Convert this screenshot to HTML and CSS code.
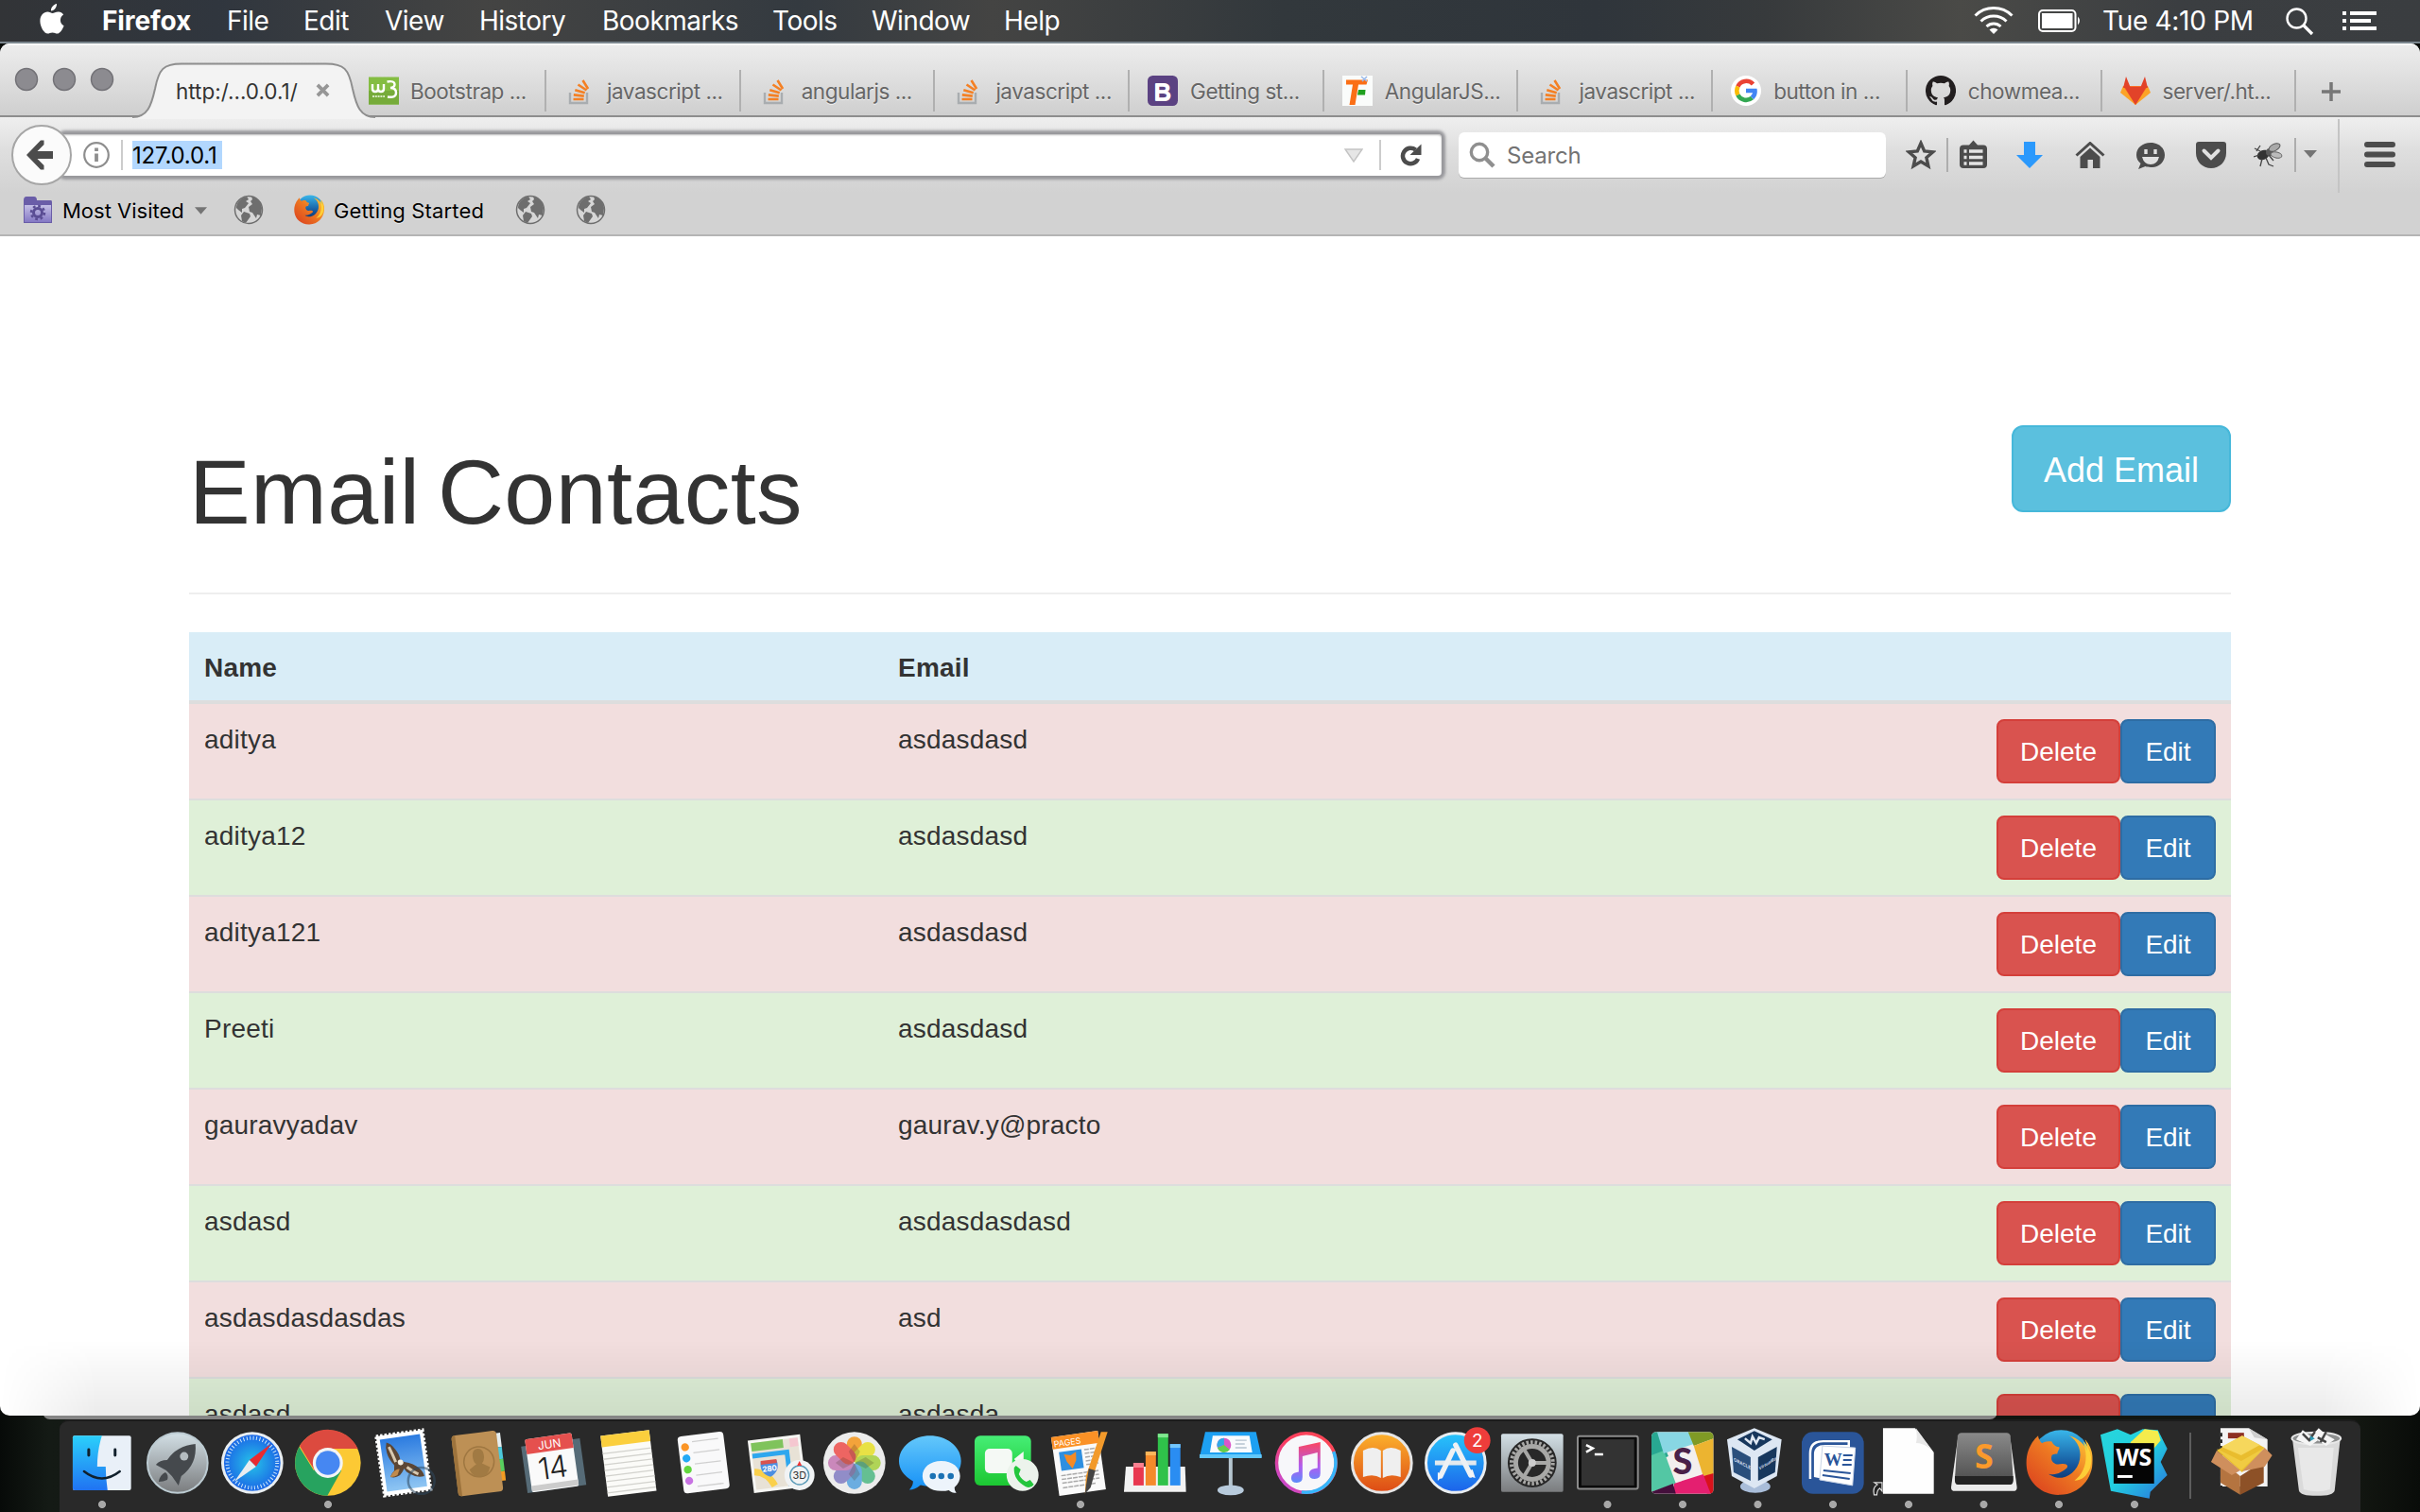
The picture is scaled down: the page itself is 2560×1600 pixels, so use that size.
FILE: index.html
```html
<!DOCTYPE html>
<html lang="en">
<head>
<meta charset="utf-8">
<title>Email Contacts</title>
<link rel="stylesheet" href="styles.css">
</head>
<body>
<svg class="defs" width="0" height="0" aria-hidden="true">
  <defs>
    <symbol id="so" viewBox="0 0 32 32">
      <path d="M6 18v11h18V18" fill="none" stroke="#a9adb0" stroke-width="2.4"/>
      <path d="M9.5 25h11M9.8 20.4l11 1.2M11.3 15.2l10.4 3M14.5 9.5l9 6M19.500 5l5.600 9" stroke="#f48024" stroke-width="2.600" fill="none"/>
    </symbol>
    <symbol id="globe" viewBox="0 0 32 32">
      <circle cx="16" cy="16" r="14.500" fill="#d6d6d6" stroke="#6e6e6e" stroke-width="1.500"/>
      <path d="M3 14C3 8 8 3 14 2l2 3-3 2 3 2-4 5-3 1 0 4-4-3zM19 2c6 1 10 6 11 12l-1 8-4-1-1 4-4-6-3-1-1-5 4-3-2-3 2-2zM11 18l6 2 1 3-5 7-4-2-1-6z" fill="#6e6e6e"/>
    </symbol>
    <symbol id="ff" viewBox="0 0 70 70">
      <circle cx="37" cy="32" r="31" fill="url(#gBlue)"/>
      <path d="M45 7c8 4 12 12 12 20 0 13-9 22-19 24-8 1-14-4-14-4 8 2 14-2 19-6 3-5-5-5-9-4-5 0-8-4-7-8 0-3 4-3 6-3 0-3 3-5 2-7-3 0-6-2-8-6-4 0-7 0-10 2-3-3-4-6-4-8C5 14-1 26 1 41c2 16 17 29 35 28 22-1 36-19 34-41-1-7-4-13-8-17 2 5 3 9 2 12C62 16 54 9 45 7z" fill="url(#gFox)"/>
      <path d="M60 13c6 16 3 32-9 41 8 0 13-5 16-12 4-11 0-23-7-29z" fill="#ffd93b" opacity=".85"/>
    </symbol>
    <linearGradient id="gBlue" x1="0" y1="0" x2="0" y2="1"><stop offset="0" stop-color="#39b6ea"/><stop offset=".6" stop-color="#14559c"/><stop offset="1" stop-color="#0b2a5c"/></linearGradient>
    <linearGradient id="gFox" x1="0" y1="1" x2="1" y2="0"><stop offset="0" stop-color="#d83a1e"/><stop offset=".55" stop-color="#ee7a22"/><stop offset="1" stop-color="#ffd23a"/></linearGradient>
    <linearGradient id="gFinder" x1="0" y1="0" x2="0" y2="1"><stop offset="0" stop-color="#2bd0fb"/><stop offset="1" stop-color="#2073f2"/></linearGradient>
    <linearGradient id="gSilver" x1="0" y1="0" x2="0" y2="1"><stop offset="0" stop-color="#d3e0e6"/><stop offset="1" stop-color="#7a7c7e"/></linearGradient>
    <radialGradient id="gSafari"><stop offset="0" stop-color="#26c3e8"/><stop offset="1" stop-color="#1b67e6"/></radialGradient>
    <linearGradient id="gSky" x1="0" y1="0" x2="0" y2="1"><stop offset="0" stop-color="#2b7be0"/><stop offset="1" stop-color="#8fc6f3"/></linearGradient>
    <linearGradient id="gGreen" x1="0" y1="0" x2="0" y2="1"><stop offset="0" stop-color="#46ee76"/><stop offset="1" stop-color="#1cc732"/></linearGradient>
    <linearGradient id="gMsg" x1="0" y1="0" x2="0" y2="1"><stop offset="0" stop-color="#64c8fb"/><stop offset="1" stop-color="#1590f6"/></linearGradient>
    <linearGradient id="gBooks" x1="0" y1="0" x2="0" y2="1"><stop offset="0" stop-color="#fcb22c"/><stop offset="1" stop-color="#dd4a15"/></linearGradient>
    <linearGradient id="gStore" x1="0" y1="0" x2="0" y2="1"><stop offset="0" stop-color="#27c5fb"/><stop offset="1" stop-color="#1c62ea"/></linearGradient>
    <linearGradient id="gRing" x1="0" y1="1" x2="1" y2="0"><stop offset="0" stop-color="#b84df0"/><stop offset=".5" stop-color="#fb3c5f"/><stop offset="1" stop-color="#fb4a55"/></linearGradient>
    <linearGradient id="gNote" x1="0" y1="0" x2="0" y2="1"><stop offset="0" stop-color="#fb4660"/><stop offset=".6" stop-color="#b05cf0"/><stop offset="1" stop-color="#5c8cfb"/></linearGradient>
    <linearGradient id="gSub" x1="0" y1="0" x2="0" y2="1"><stop offset="0" stop-color="#8a8a8a"/><stop offset="1" stop-color="#4c4c4c"/></linearGradient>
    <linearGradient id="gWs" x1="0" y1="0" x2="1" y2="1"><stop offset="0" stop-color="#27d6dc"/><stop offset=".5" stop-color="#22cfe0"/><stop offset="1" stop-color="#2a72dd"/></linearGradient>
    <linearGradient id="gPurple" x1="0" y1="0" x2="0" y2="1"><stop offset="0" stop-color="#c4bfe6"/><stop offset="1" stop-color="#8478c4"/></linearGradient>
  </defs>
</svg>

<header class="menubar">
  <svg class="apple" viewBox="0 0 26 32"><path d="M18 0c.3 3.500-2.500 7.300-6 7.400C11.600 4 14.800.6 18 0zM25.600 23.200c-1.500 4-4.300 8.300-7 8.400-2 0-2.700-1.200-5.100-1.200s-3.300 1.200-5.200 1.200C5 31.600.4 24.700.4 18.200c0-6.300 4-9.600 7.900-9.700 2.200 0 4 1.400 5.300 1.400 1.300 0 3.700-1.700 6.500-1.500 1.700.1 3.900 1 5 3-4.700 3-3.900 9.800.5 11.800z" fill="#fff"/></svg>
  <nav class="menus"><b>Firefox</b><span>File</span><span>Edit</span><span>View</span><span>History</span><span>Bookmarks</span><span>Tools</span><span>Window</span><span>Help</span></nav>
  <svg class="wifi" viewBox="0 0 42 30"><g fill="none" stroke="#fff" stroke-width="3"><path d="M1.500 10.500a28 28 0 0 1 39 0"/><path d="M7.500 16.500a19.500 19.500 0 0 1 27 0"/><path d="M13.500 22a11 11 0 0 1 15 0"/></g><path d="M21 30l-4.500-4.500a6.500 6.500 0 0 1 9 0z" fill="#fff"/></svg>
  <svg class="battery" viewBox="0 0 46 24"><rect x="1" y="1" width="38.500" height="22" rx="4" fill="none" stroke="#fff" stroke-width="2"/><rect x="4" y="4" width="32.500" height="16" fill="#fff"/><path d="M42 7.500q4 4.500 0 9z" fill="#fff"/></svg>
  <span class="clock">Tue 4:10 PM</span>
  <svg class="spot" viewBox="0 0 30 30"><circle cx="11.500" cy="11.500" r="10" fill="none" stroke="#fff" stroke-width="2.400"/><path d="M18.500 18.500l9.500 9.500" stroke="#fff" stroke-width="3.200"/></svg>
  <svg class="list" viewBox="0 0 36 20"><path d="M0 2h4M8 2h28M0 10h4M8 10h22M0 18h4M8 18h28" stroke="#fff" stroke-width="4"/></svg>
</header>

<main class="window">
  <div class="tabs">
    <svg class="lights" viewBox="0 0 140 76"><g fill="#8c8b90" stroke="#737277" stroke-width="1.500"><circle cx="28" cy="38" r="11.500"/><circle cx="68" cy="38" r="11.500"/><circle cx="108" cy="38" r="11.500"/></g></svg>
    <div class="tab-active">
      <svg class="tab-shape" viewBox="0 0 260 60"><path d="M0 58.500C16 58.500 20 46 24 28 28 8 33 2.500 52 2.500H205c19 0 24 5.500 28 25.500 4 18 8 30.500 24 30.500V60H0z" fill="#f3f3f3"/><path d="M0 58C16 58 20 46 24 28 28 7 33 1.500 52 1.500H205c19 0 24 5.500 28 26.500 4 18 8 30 24 30" fill="none" stroke="#8e8e8e" stroke-width="2"/></svg>
      <span>http:/...0.0.1/</span>
      <svg class="close" viewBox="0 0 16 16"><path d="M2 2l12 12M14 2L2 14" stroke="#969696" stroke-width="4"/></svg>
    </div>
    <div class="tab first"><svg viewBox="0 0 32 32"><rect y="1.500" width="32" height="29" fill="#84bd42"/><rect y="16" width="32" height="14.500" fill="#76ab3a"/><path d="M4 9v5q0 3 3 3t3-3V9M10 12v2q0 3 3 3t3-3V9M19.500 6.500q8-1.500 8 3 0 3-4.500 3.500 6 0 6 5 0 6-9 4.500" fill="none" stroke="#fff" stroke-width="2.400"/><path d="M4 22h13" stroke="#d6eac0" stroke-width="2.200" stroke-dasharray="2 .8"/></svg><span>Bootstrap ...</span></div>
    <div class="tab"><svg><use href="#so"/></svg><span>javascript ...</span></div>
    <div class="tab"><svg><use href="#so"/></svg><span>angularjs ...</span></div>
    <div class="tab"><svg><use href="#so"/></svg><span>javascript ...</span></div>
    <div class="tab"><svg viewBox="0 0 32 32"><rect width="32" height="32" rx="5.500" fill="#5b4282"/><text x="16" y="25.500" text-anchor="middle" class="t-b">B</text></svg><span>Getting st...</span></div>
    <div class="tab"><svg viewBox="0 0 32 32"><rect width="32" height="32" fill="#fafcfb"/><path d="M4 4.500h23l-1.500 5H17L13.500 31H7.500L11 9.500H4z" fill="#fb6f16"/><path d="M17 15h7.500l-.5 5.500h-8z" fill="#1fa01f"/><path d="M20 1l6 5M26 1l-5 5" stroke="#9bb8e8" stroke-width="1.500"/></svg><span>AngularJS...</span></div>
    <div class="tab"><svg><use href="#so"/></svg><span>javascript ...</span></div>
    <div class="tab"><svg viewBox="0 0 32 32"><circle cx="16" cy="16" r="16" fill="#fff"/><g fill="none" stroke-width="4.600"><path d="M23.500 9A9.800 9.800 0 0 0 7.400 11.500" stroke="#ea4335"/><path d="M7.400 11.500a10 10 0 0 0 0 9" stroke="#fbbc05"/><path d="M7.400 20.500A9.800 9.800 0 0 0 22.500 23.500" stroke="#34a853"/><path d="M22.500 23.500Q26 20 25.500 16H16" stroke="#4285f4"/></g></svg><span>button in ...</span></div>
    <div class="tab"><svg viewBox="0 0 16 16"><path fill="#221e1f" d="M8 0a8 8 0 0 0-2.530 15.590c.4.070.55-.17.55-.38v-1.490c-2.230.48-2.700-.94-2.700-.94-.36-.93-.89-1.170-.89-1.170-.73-.5.060-.49.060-.49.8.06 1.230.83 1.230.83.71 1.220 1.870.87 2.330.66.070-.52.28-.87.5-1.070-1.770-.2-3.640-.89-3.640-3.950 0-.87.310-1.590.82-2.150-.08-.2-.36-1.020.08-2.120 0 0 .67-.21 2.200.82a7.600 7.600 0 0 1 4 0c1.530-1.040 2.200-.82 2.200-.82.44 1.100.16 1.920.08 2.120.51.560.82 1.270.82 2.150 0 3.070-1.870 3.750-3.650 3.950.29.25.54.73.54 1.480v2.190c0 .21.150.46.550.38A8 8 0 0 0 8 0z"/></svg><span>chowmea...</span></div>
    <div class="tab"><svg viewBox="0 0 32 32"><path d="M16 31L0 18l3-7h26l3 7z" fill="#fca326"/><path d="M16 31L3 11h26z" fill="#fc6d26"/><path d="M6 1l4.500 11h11L26 1l3 12-2 0-11 18L5 13H3z" fill="#e24329"/></svg><span>server/.ht...</span></div>
    <svg class="plus" viewBox="0 0 20 20"><path d="M10 0v20M0 10h20" stroke="#777" stroke-width="3.500"/></svg>
  </div>

  <div class="toolbar">
    <div class="url">
      <svg class="info" viewBox="0 0 28 28"><circle cx="14" cy="14" r="12.800" fill="none" stroke="#8e8e8e" stroke-width="2.200"/><path d="M14 12.500v8.500M14 6.500v3.500" stroke="#8e8e8e" stroke-width="3.800"/></svg>
      <i class="vsep"></i><span class="address">127.0.0.1</span>
      <svg class="drop" viewBox="0 0 20 15"><path d="M1 1h18L10 14z" fill="#e6e6e6" stroke="#c4c4c4" stroke-width="1.500"/></svg>
      <i class="vsep"></i>
      <svg class="reload" viewBox="0 0 24 24"><path d="M17.500 6.500A8.300 8.300 0 1 0 20 16" fill="none" stroke="#4c4c4c" stroke-width="4.500"/><path d="M23.500.5v11.500H11.500z" fill="#4c4c4c"/></svg>
    </div>
    <svg class="back" viewBox="0 0 64 64"><circle cx="32" cy="32" r="31" fill="#fbfbfb" stroke="#a6a6a6" stroke-width="2"/><path d="M16 32L31 16.500h3.500v4.500L27.500 28H44v8H27.500l7 7v4.500H31z" fill="#4c4c4c"/></svg>
    <div class="search"><svg viewBox="0 0 28 28"><circle cx="11" cy="11" r="8.700" fill="none" stroke="#8f8f8f" stroke-width="3.400"/><path d="M17 17l9 9" stroke="#8f8f8f" stroke-width="4.500"/></svg><span>Search</span></div>
    <svg class="i-star" viewBox="0 0 32 32"><path d="M16 3.500l3.700 8.400 9.100.9-6.900 6 2 9-7.900-4.700L8.100 27.800l2-9-6.900-6 9.100-.9z" fill="none" stroke="#4c4c4c" stroke-width="3.400"/></svg>
    <i class="tsep a"></i>
    <svg class="i-clip" viewBox="0 0 29 32"><path d="M4 5.500h6l4.500-5 4.500 5h6q4 0 4 4V26q0 4-4 4H4q-4 0-4-4V9.500q0-4 4-4z" fill="#4c4c4c"/><path d="M4.500 12h3M10 12h14.500M4.500 18.500h3M10 18.500h14.500M4.500 25h3M10 25h14.500" stroke="#e4e4e4" stroke-width="3.400"/></svg>
    <svg class="i-down" viewBox="0 0 28 28"><path d="M8 0h12v14h8L14 28 0 14h8z" fill="#2b99fc"/></svg>
    <svg class="i-home" viewBox="0 0 32 28"><path d="M1.500 14.500L16 1.500l14.500 13" fill="none" stroke="#4c4c4c" stroke-width="3"/><path d="M5.500 16L16 6.500 26.500 16v12h-7.500v-9h-5.500v9h-8z" fill="#4c4c4c"/></svg>
    <svg class="i-smile" viewBox="0 0 30 28"><path d="M15 0c8.500 0 15 5.500 15 13s-6 13-15 13c-2 0-4-.3-5.500-.9L2 28l2.500-6C1.500 19.500 0 16.500 0 13 0 5.500 6.500 0 15 0z" fill="#4c4c4c"/><path d="M10 7v5M20 7v5" stroke="#e0e0e0" stroke-width="3.400"/><path d="M6 15h18q-2 8-9 8t-9-8z" fill="#e0e0e0"/></svg>
    <svg class="i-pocket" viewBox="0 0 32 28"><path d="M3 0h26q3 0 3 3v9c0 9-7 16-16 16S0 21 0 12V3q0-3 3-3z" fill="#4c4c4c"/><path d="M8.500 9.500l7.500 7.500 7.500-7.500" fill="none" stroke="#e0e0e0" stroke-width="4" stroke-linecap="round"/></svg>
    <svg class="i-bug" viewBox="0 0 32 26"><ellipse cx="10" cy="13" rx="6.500" ry="5" fill="#333" transform="rotate(-25 10 13)"/><circle cx="17" cy="10" r="4" fill="#5a5a5a"/><ellipse cx="22" cy="5" rx="6.500" ry="3.500" fill="#a9a9a9" stroke="#555" transform="rotate(-28 22 5)"/><ellipse cx="24" cy="13" rx="6" ry="3" fill="#bbb" stroke="#666" transform="rotate(12 24 13)"/><path d="M7 9L1 6M6 13l-6 2M9 17L7 25M13 16l3 7 5 2M16 13l5 6M3 9l4-6" stroke="#444" stroke-width="1.300" fill="none"/></svg>
    <i class="tsep b"></i>
    <svg class="i-tri" viewBox="0 0 14 8"><path d="M0 0h14L7 8z" fill="#747474"/></svg>
    <i class="tsep c"></i>
    <svg class="i-menu" viewBox="0 0 33 27"><path d="M3 3h27M3 13.500h27M3 24h27" stroke="#4c4c4c" stroke-width="6" stroke-linecap="round"/></svg>
  </div>

  <div class="bookmarks">
    <svg class="folder" viewBox="0 0 32 32"><path d="M1 5q0-4 3-4h8q3 0 3 4h15q1 0 1 2v22H1z" fill="#6a5da8"/><path d="M2 10h28v18H2z" fill="url(#gPurple)"/><circle cx="16" cy="18" r="4.500" fill="none" stroke="#5a4d94" stroke-width="3"/><circle cx="16" cy="18" r="7" fill="none" stroke="#5a4d94" stroke-width="2.500" stroke-dasharray="2.750"/></svg>
    <span class="bm mv">Most Visited</span>
    <svg class="bm-tri" viewBox="0 0 14 8"><path d="M0 0h14L7 8z" fill="#747474"/></svg>
    <svg class="g1"><use href="#globe"/></svg>
    <svg class="ffico"><use href="#ff"/></svg>
    <span class="bm gs">Getting Started</span>
    <svg class="g2"><use href="#globe"/></svg>
    <svg class="g3"><use href="#globe"/></svg>
  </div>

  <section class="page">
    <div class="heading"><h1>Email Contacts</h1><button class="btn info-btn">Add Email</button></div>
    <table>
      <thead><tr><th>Name</th><th>Email</th><th></th></tr></thead>
      <tbody>
        <tr><td>aditya</td><td>asdasdasd</td><td><div class="acts"><button class="btn del">Delete</button><button class="btn edit">Edit</button></div></td></tr>
        <tr><td>aditya12</td><td>asdasdasd</td><td><div class="acts"><button class="btn del">Delete</button><button class="btn edit">Edit</button></div></td></tr>
        <tr><td>aditya121</td><td>asdasdasd</td><td><div class="acts"><button class="btn del">Delete</button><button class="btn edit">Edit</button></div></td></tr>
        <tr><td>Preeti</td><td>asdasdasd</td><td><div class="acts"><button class="btn del">Delete</button><button class="btn edit">Edit</button></div></td></tr>
        <tr><td>gauravyadav</td><td>gaurav.y@practo</td><td><div class="acts"><button class="btn del">Delete</button><button class="btn edit">Edit</button></div></td></tr>
        <tr><td>asdasd</td><td>asdasdasdasd</td><td><div class="acts"><button class="btn del">Delete</button><button class="btn edit">Edit</button></div></td></tr>
        <tr><td>asdasdasdasdas</td><td>asd</td><td><div class="acts"><button class="btn del">Delete</button><button class="btn edit">Edit</button></div></td></tr>
        <tr><td>asdasd</td><td>asdasda</td><td><div class="acts"><button class="btn del">Delete</button><button class="btn edit">Edit</button></div></td></tr>
      </tbody>
    </table>
    <div class="shade"></div>
  </section>
</main>

<div class="behind"></div>
<footer class="dock">
  <svg class="on" viewBox="0 0 80 98"><rect x="9" y="17" width="62" height="58" rx="2" fill="#e9f0f8"/><path d="M11 17h29q-5 16-5 33h9q0 12 2 25H11q-2 0-2-2V19q0-2 2-2z" fill="url(#gFinder)"/><path d="M26 32v6M54 32v6" stroke="#10202c" stroke-width="3" stroke-linecap="round"/><path d="M21 55q19 15 38 0" fill="none" stroke="#10202c" stroke-width="2.500" stroke-linecap="round"/></svg>
  <svg viewBox="0 0 80 98"><circle cx="40" cy="46" r="32" fill="url(#gSilver)" stroke="#bccbd2" stroke-width="2"/><path d="M59 26q2 22-15 34l-3 10-7-10-6-6-11-6q4-5 12-5 10-15 30-17z" fill="#45494d"/><circle cx="47" cy="39" r="4.500" fill="#b4bcc0"/><path d="M27 56q4 3 2 8-4 2-9 2 1-7 7-10z" fill="#45494d"/></svg>
  <svg viewBox="0 0 80 98"><circle cx="40" cy="46" r="33" fill="#e9eef1"/><circle cx="40" cy="46" r="30" fill="url(#gSafari)"/><circle cx="40" cy="46" r="26.500" fill="none" stroke="#d0e8fa" stroke-width="4" stroke-dasharray="1 2.470"/><path d="M60 26L44 50l-7-7z" fill="#ea2a30"/><path d="M21 66l16-23 7 7z" fill="#e9edf0"/></svg>
  <svg class="on" viewBox="0 0 80 98"><circle cx="40" cy="46" r="35" fill="#fcc934"/><path d="M40 46l-15 8L9.500 29a35 35 0 0 0 30 52l15-27z" fill="#27a35f"/><path d="M40 31h32A35 35 0 0 0 10 28l16 26z" fill="#dc4a3f"/><circle cx="40" cy="46" r="16" fill="#f4f4f4"/><circle cx="40" cy="46" r="12.800" fill="#4687f2"/></svg>
  <svg viewBox="0 0 80 98"><g transform="rotate(-8 40 46)"><rect x="15" y="14" width="50" height="64" fill="#fff" stroke="#fff" stroke-width="3" stroke-dasharray="2.500 2"/><rect x="18.500" y="18" width="43" height="56" fill="url(#gSky)"/><path d="M25 22q5 2 8 8 4 6 4 12l4 3q10 3 15 9 4 5 4 9-8 1-14-4-5-3-6-7l-3 4q-5 6-13 3 2-4 5-6l1-6q-5-7-6-14-1-6 1-11z" fill="#5c4634"/><path d="M27 27q3 9 5 17M43 51q6 6 11 9" stroke="#d8c9b0" stroke-width="3" fill="none"/><path d="M27 55q5-4 8-3l-3 6q-4 2-8 1z" fill="#c08a4c"/><circle cx="37" cy="45" r="3" fill="#f5efe3"/></g><circle cx="59" cy="65" r="14" fill="none" stroke="#30485f" opacity=".55" stroke-width="2.500"/></svg>
  <svg viewBox="0 0 80 98"><g transform="rotate(-7 40 46)"><path d="M62 17h5v15h-5z" fill="#e6eef0"/><path d="M62 32h5v13h-5z" fill="#4cc9dc"/><path d="M62 45h5v13h-5z" fill="#58d05f"/><path d="M62 58h5v10h-5z" fill="#f29c23"/><rect x="15" y="14" width="48" height="65" rx="4" fill="#bd9055"/><path d="M15 18q0-4 4-4v65q-4 0-4-4z" fill="#9d733c"/><circle cx="41" cy="45" r="16" fill="none" stroke="#9f7741" stroke-width="1.500"/><path d="M35 39q0-8 6-8t6 8q0 6-3 8l8 5q-3 9-11 9t-11-9l8-5q-3-2-3-8z" fill="#a17a43"/></g></svg>
  <svg viewBox="0 0 80 98"><g transform="rotate(-8 40 46)"><path d="M8 24h63v50H8z" fill="#566b77"/><rect x="13" y="17" width="50" height="57" rx="2" fill="#fafafa"/><path d="M13 67h50v6H13z" fill="#ccc"/><path d="M15 17h46q2 0 2 2v14H13V19q0-2 2-2z" fill="#e5504e"/><text x="38" y="30" text-anchor="middle" class="t-jun">JUN</text><text x="38" y="62" text-anchor="middle" class="t-14">14</text></g></svg>
  <svg viewBox="0 0 80 98"><g transform="rotate(-7 40 46)"><rect x="14" y="14" width="52" height="65" fill="#fbfbf8"/><rect x="14" y="14" width="52" height="12" fill="#fbcf3d"/><path d="M14 33h52M14 39h52M14 45h52M14 51h52M14 57h52M14 63h52M14 69h52M14 75h52" stroke="#d2d2cd" stroke-width="1.300"/></g></svg>
  <svg viewBox="0 0 80 98"><g transform="rotate(-7 40 46)"><rect x="15" y="15" width="49" height="61" rx="4" fill="#f9f9fa"/><circle cx="22" cy="27" r="4.200" fill="#fb9526"/><circle cx="22" cy="39" r="4.200" fill="#23a9f5"/><circle cx="22" cy="51" r="4.200" fill="#62d63f"/><circle cx="22" cy="63" r="4.200" fill="#c873e3"/><path d="M30 22h28M30 34h28M30 46h28M30 58h28M30 70h28" stroke="#d0d0d0" stroke-width="1.300"/></g></svg>
  <svg viewBox="0 0 80 98"><g transform="rotate(-7 36 46)"><rect x="9" y="19" width="56" height="56" fill="#f6f6f3"/><rect x="12" y="22" width="50" height="50" fill="#e8e2d6"/><path d="M12 22h34v9H12z" fill="#7fc35c"/><path d="M53 22h9v9h-9z" fill="#f5c7d0"/><path d="M12 36h37v36" fill="none" stroke="#2ea7ee" stroke-width="5"/><path d="M12 53q14 2 20 17" fill="none" stroke="#fad04b" stroke-width="7"/><path d="M20 43h17q3 12-8.500 17-11.500-5-8.500-17z" fill="#4c8fe2"/><path d="M20 42h17v4H20z" fill="#d9534f"/><text x="28.500" y="54" text-anchor="middle" class="t-280">280</text></g><circle cx="61" cy="59" r="16" fill="#f1f3f4"/><circle cx="61" cy="59" r="10" fill="none" stroke="#5b9bb8" stroke-width="1.500"/><path d="M61 44l2.500 5h-5z" fill="#e33"/><text x="61" y="63" text-anchor="middle" class="t-3d">3D</text></svg>
  <svg viewBox="0 0 80 98"><circle cx="40" cy="46" r="33" fill="#ececec"/><g opacity=".88"><rect x="32" y="18" width="16" height="27" rx="8" fill="#f59a22"/><rect x="32" y="18" width="16" height="27" rx="8" fill="#e8e02e" transform="rotate(45 40 46)"/><rect x="32" y="18" width="16" height="27" rx="8" fill="#a8d143" transform="rotate(90 40 46)"/><rect x="32" y="18" width="16" height="27" rx="8" fill="#53b986" transform="rotate(135 40 46)"/><rect x="32" y="18" width="16" height="27" rx="8" fill="#5aa5df" transform="rotate(180 40 46)"/><rect x="32" y="18" width="16" height="27" rx="8" fill="#8580c4" transform="rotate(225 40 46)"/><rect x="32" y="18" width="16" height="27" rx="8" fill="#c67bb5" transform="rotate(270 40 46)"/><rect x="32" y="18" width="16" height="27" rx="8" fill="#ee5350" transform="rotate(315 40 46)"/></g><path d="M40 46l-6-12 6-8 6 8zM40 46l12-6 9 6-9 6zM40 46l6 12-6 7-6-7zM40 46l-12 6-8-6 8-6z" fill="#40301f" opacity=".22"/></svg>
  <svg viewBox="0 0 80 98"><path d="M40 17c18 0 33 12 33 27S58 71 40 71q-5 0-10-1.500-6 5-12 5 4-4 4-9Q7 57 7 44C7 29 22 17 40 17z" fill="url(#gMsg)"/><path d="M52 44c12 0 20 7 20 16q0 7-6 12 0 4 2 6-5 0-8-3-3 1-8 1c-12 0-20-7-20-16s8-16 20-16z" fill="#edf4fb"/><g fill="#1b72b4"><circle cx="43" cy="60" r="3.300"/><circle cx="52" cy="60" r="3.300"/><circle cx="62" cy="60" r="3.300"/></g></svg>
  <svg viewBox="0 0 80 98"><rect x="7" y="17" width="60" height="53" rx="6" fill="url(#gGreen)"/><rect x="18" y="31" width="29" height="26" rx="5" fill="#f5f9f5"/><path d="M49 42l10-8v20z" fill="#f5f9f5"/><circle cx="58" cy="59" r="17" fill="#ecf3ec"/><path d="M51 49l5 4-2 5q3 6 8 8l4-2 4 5q-4 5-9 2Q48 64 49 51z" fill="#23c63c"/></svg>
  <svg class="on" viewBox="0 0 80 98"><g transform="rotate(-8 38 46)"><rect x="13" y="15" width="50" height="63" fill="#fafafa"/><rect x="13" y="15" width="50" height="13" fill="#fb9126"/><text x="15" y="26" class="t-pages">PAGES</text><rect x="19" y="32" width="24" height="20" fill="#2e8fe0"/><path d="M31 37l6-3-1 9-5 8-5-8-2-8z" fill="#f58a24"/><path d="M46 33h13M46 37h13M46 41h13M46 45h13M46 49h13M18 57h40M18 61h40M18 65h40M18 70h35" stroke="#aaa" stroke-width="1.500" stroke-dasharray="5 1"/></g><path d="M62 13h7L53 62l-8 17 1-19z" fill="#f29a2b"/><path d="M49 52l7 2-5 18-6 7 1-8z" fill="#444"/></svg>
  <svg viewBox="0 0 80 98"><path d="M8 50h63l1 27H6z" fill="#f2f2f2"/><path d="M16 46h11v24H16z" fill="#e8374f"/><path d="M29 34h11v36H29z" fill="#f58a2b"/><path d="M42 15h11v55H42z" fill="#2fc24a"/><path d="M55 26h11v44H55z" fill="#2a8df2"/><path d="M16 46h11v5H16z" fill="#fb8090"/><path d="M29 34h11v4H29z" fill="#fbb75c"/><path d="M42 15h11v4H42z" fill="#80e890"/><path d="M55 26h11v4H55z" fill="#74c6fb"/></svg>
  <svg viewBox="0 0 80 98"><path d="M13 13h54l6 27H7z" fill="#1da0f2"/><path d="M7 37h66v4H7z" fill="#62c8fa"/><path d="M21 17h39l3 18H18z" fill="#f9fbfd"/><circle cx="33" cy="27" r="7.500" fill="#d957c8"/><path d="M33 27v-7.500a7.500 7.500 0 0 0-7 10z" fill="#2ea9e8"/><path d="M33 27l-7 3a7.500 7.500 0 0 0 13 2z" fill="#62cf4e"/><path d="M45 22h12M45 26h10M45 30h12" stroke="#b5c4d0" stroke-width="1.500"/><path d="M38 41h4v34h-4z" fill="#b6c6d0"/><ellipse cx="40" cy="75" rx="14" ry="5.500" fill="#b7cadb"/></svg>
  <svg viewBox="0 0 80 98"><circle cx="40" cy="46" r="31.500" fill="#f7f7fa" stroke="url(#gRing)" stroke-width="3.500"/><path d="M69 34a31.500 31.500 0 0 1-34 43" fill="none" stroke="#35b6fb" stroke-width="3.500"/><path d="M32 29l23-5v33q0 6-6 6t-6-5 6-6l3-.500V35l-16 4v22q0 6-6 6t-6-5 6-6l2-.500z" fill="url(#gNote)"/></svg>
  <svg viewBox="0 0 80 98"><circle cx="40" cy="46" r="31.500" fill="url(#gBooks)" stroke="#e6e6e6" stroke-width="3"/><path d="M20 33q11-6 19 0v29q-8-5-19-1zM41 33q8-6 19 0v28q-11-4-19 1z" fill="#efefef"/></svg>
  <svg viewBox="0 0 80 98"><circle cx="39" cy="46" r="31.500" fill="url(#gStore)" stroke="#e9edf0" stroke-width="3"/><path d="M17 46h44" stroke="#e3e9ee" stroke-width="5"/><path d="M36 33L23 60M39 27l16 32" stroke="#eef1f4" stroke-width="5.500" stroke-linecap="round"/><path d="M20 56l6 3-6 6zM51 55l6-2 3 9q-6-1-9-7z" fill="#f2f4f6"/><circle cx="62" cy="22" r="14" fill="#ee3d3b"/><text x="62" y="29" text-anchor="middle" class="t-2">2</text></svg>
  <svg viewBox="0 0 80 98"><rect x="7" y="15" width="66" height="62" rx="2" fill="url(#gSilver)"/><circle cx="40" cy="46" r="26" fill="#282828"/><circle cx="40" cy="46" r="22" fill="none" stroke="#a8a8a6" stroke-width="4" stroke-dasharray="2.600 2"/><circle cx="40" cy="46" r="17.500" fill="none" stroke="#a8a8a6" stroke-width="5"/><path d="M40 46h17M40 46l-9-15M40 46l-9 15" stroke="#a8a8a6" stroke-width="4"/><circle cx="40" cy="46" r="4" fill="#ccc"/></svg>
  <svg class="on" viewBox="0 0 80 98"><rect x="8" y="17.500" width="64" height="56" rx="2" fill="#0a0a0a" stroke="#8c8c8c" stroke-width="2"/><rect x="12" y="21" width="56" height="49" fill="#333"/><path d="M17 27l7 3.500-7 4M26 37h9" fill="none" stroke="#fff" stroke-width="2.500"/></svg>
  <svg class="on" viewBox="0 0 80 98"><clipPath id="sl"><rect x="7" y="13" width="66" height="66" rx="5"/></clipPath><g clip-path="url(#sl)"><rect x="7" y="13" width="66" height="66" fill="#f3efee"/><path d="M7 13h8l10 26-18 8z" fill="#28a791"/><path d="M7 38l13-5 13 35-26 9z" fill="#53c7a4"/><path d="M13 13h35l4 13-32 10z" fill="#88d6e3"/><path d="M46 13h27v7L52 28z" fill="#7f9a25"/><path d="M52 28l21-8v38l-11 2z" fill="#ecb430"/><path d="M62 60l11-3v22h-7z" fill="#d8121b"/><path d="M31 68l31-10 8 21H31z" fill="#e41f70"/><path d="M7 77l23-9 3 11H7z" fill="#440f3c"/></g><text x="40" y="58" text-anchor="middle" class="t-s">S</text></svg>
  <svg class="on" viewBox="0 0 80 98"><ellipse cx="37" cy="71" rx="16" ry="7" fill="#a9bdd9"/><path d="M36 9L7 21l5 39 24 13 24-13 5-39z" fill="#dde7f3"/><path d="M36 12l19 9-19 12-18-12z" fill="#17375d"/><path d="M12 29l20 11v25L14 56z" fill="#2a4f7c"/><path d="M60 29L40 40v25l18-9z" fill="#17375d"/><path d="M26 20l6 5 2-7 4 7 3-6 6 2" stroke="#dfe8f3" stroke-width="2.500" fill="none"/><text transform="matrix(.9 .45 0 1 14 44)" class="t-tiny">ORACLE</text><text transform="matrix(.8 -.5 0 1 41 54)" class="t-tiny">VirtualBox</text></svg>
  <svg class="on" viewBox="0 0 80 98"><rect x="7" y="13" width="66" height="66" rx="12" fill="#2a5599"/><path d="M16 63V36q0-13 14-13h27v8" fill="none" stroke="#fff" stroke-width="2.500"/><path d="M20 61V37q0-10 12-10h26v10H30v26z" fill="#fff"/><path d="M29 28l35 2-3 40-35-6z" fill="#fff" stroke="#c9d4e6"/><text x="31" y="49" class="t-w">W</text><path d="M51 38h10M51 43h9M50 48h10M30 54l29 3M29 59l29 4" stroke="#2a5599" stroke-width="2"/></svg>
  <svg class="on" viewBox="0 0 80 98"><path d="M13 9h34l20 26v44H13z" fill="#fefefe"/><path d="M48 9q2 10 0 16 10 0 19 10z" fill="#e8e8e8"/><path d="M3.500 80q-2-8 3.500-11l-3-2h8v9l-2.500-3q-3 2-3 7z" fill="#222" stroke="#ddd" stroke-width="1.200"/></svg>
  <svg class="on" viewBox="0 0 80 98"><path d="M12 21h56l7 51q0 4-4 4H9q-4 0-4-4z" fill="#ececec"/><path d="M16 14h48q3 0 4 3l3 46q0 5-3 5H12q-3 0-3-5l3-46q1-3 4-3z" fill="url(#gSub)"/><path d="M9 60h62v4q0 5-3 5H12q-3 0-3-5z" fill="#242424"/><text x="40" y="52" text-anchor="middle" class="t-sub">S</text></svg>
  <svg class="on" viewBox="0 0 80 98"><use href="#ff" x="5" y="10" width="71" height="71"/></svg>
  <svg class="on" viewBox="0 0 80 98"><path d="M4 16l18-6 14 6 13-6 16 1 10 20-7 14 7 14-18 18-1 7-41-8z" fill="url(#gWs)"/><path d="M36 24l15-14 14 2 3 10-10 12H36z" fill="#f4ec4c"/><rect x="18" y="25" width="43" height="43" fill="#050505"/><text x="39.500" y="49" text-anchor="middle" class="t-ws">WS</text><path d="M22 60.500h16" stroke="#fff" stroke-width="3"/></svg>
  <i class="dsep"></i>
  <svg viewBox="0 0 80 98"><path d="M17 9h30l20 12v50H17z" fill="#f3f3f3"/><path d="M47 9l6 10 14 2z" fill="#cfcfcf"/><path d="M18 14v57" stroke="#222" stroke-width="2" stroke-dasharray="4 3"/><path d="M25 14h17v6H25z" fill="#8c2f22"/><path d="M17 43l21 17v20L17 67z" fill="#b47440"/><path d="M38 60l25-16v23L38 80z" fill="#8d5127"/><path d="M13 33l27-16 24 13-24 26z" fill="#e9bd2e"/><path d="M18 29l22-12 19 10-20 11z" fill="#f6d75c"/><path d="M13 33l-6 12 22 14 9-5zM64 30l8 8-8 12-24 5z" fill="#cf8f5d"/><path d="M13 31l26 23 25-24-25 14z" fill="#f0cb42"/></svg>
  <svg viewBox="0 0 80 98"><path d="M14 20h51l-6 55q-1 6-19 6t-19-6z" fill="#dadada"/><path d="M20 30h38l-4 44q-13 5-28 0z" fill="#e8e8e8"/><ellipse cx="39.500" cy="20" rx="26" ry="6.500" fill="#8d8f8f" stroke="#e8e8e8" stroke-width="2"/><path d="M18 21l7-10 9 7 8-9 8 7 9 5-9 7-9-6-8 6z" fill="#f5f5f5"/><path d="M25 15l7 7 6-9M41 19l9 5M50 13l-6 11" stroke="#444" stroke-width="2.500" fill="none"/><path d="M33 17l5 3-5 3z" fill="#2e9ab4"/></svg>
</footer>
</body>
</html>
```
FILE: styles.css
```css
* { box-sizing: border-box; }
html, body { margin: 0; width: 2560px; height: 1600px; overflow: hidden; }
body {
  display: flex;
  flex-direction: column;
  position: relative;
  background: linear-gradient(90deg, #070a08, #141a15 2%, #0a0d0a 50%, #141812 97%, #090c09);
  font-family: Inter, "Noto Sans", sans-serif;
}
.defs { position: absolute; }
svg { display: block; flex: none; }

.menubar {
  height: 46px;
  flex: none;
  display: flex;
  align-items: flex-start;
  border-bottom: 2px solid #7b868e;
  color: #fff;
  font-size: 28px;
  line-height: 45px;
  background: linear-gradient(90deg, #323437, #30363e 9%, #444443 20%, #343a40 33%, #444443 41%, #32383c 53%, #2f353b 66%, #373a3c 73%, #4a4a47 81%, #3b3e41 90%, #3a3d40);
}
.apple { width: 26px; height: 32px; margin: 4px 0 0 42px; }
.menus {
  display: grid;
  grid-template-columns: 132px 81px 86px 100px 130px 180px 105px 140px 100px;
  margin-left: 40px;
  width: 1056px;
  letter-spacing: -.5px;
}
.menus > * { white-space: nowrap; }
.menus b { letter-spacing: -.1px; }
.wifi { width: 42px; height: 30px; margin: 6px 0 0 924px; }
.battery { width: 46px; height: 24px; margin: 10px 0 0 26px; }
.clock { width: 170px; margin-left: 22px; white-space: nowrap; letter-spacing: -.3px; }
.spot { width: 30px; height: 30px; margin: 8px 0 0 24px; }
.list { width: 36px; height: 20px; margin: 12px 0 0 30px; }

.window {
  height: 1452px;
  flex: none;
  background: #fff;
  border-radius: 10px;
  overflow: hidden;
  position: relative;
  z-index: 1;
}
.tabs {
  height: 78px;
  display: flex;
  background: linear-gradient(#ececec, #e4e4e4 30%, #cfcfcf);
  border-top: 2px solid #f8f8f8;
  border-bottom: 2px solid #8e8e8e;
  color: #666;
  font-size: 22.5px;
  line-height: 74px;
}
.lights { width: 140px; height: 76px; margin-top: -2px; }
.tab-active { width: 236px; height: 76px; position: relative; color: #333; display: flex; align-items: center; padding: 22px 0 0 46px; line-height: 54px; }
.tab-shape { position: absolute; left: 0; top: 18px; width: 260px; height: 60px; }
.tab-active span { position: relative; width: 130px; white-space: nowrap; }
.close { position: relative; width: 15px; height: 15px; margin: -4px 0 0 18px; }
.tab { width: 205.7px; flex: none; display: flex; padding-left: 19px; height: 76px; position: relative; text-shadow: 0 1px 0 #f2f2f2; }
.tab::after { content: ""; position: absolute; right: 0; top: 26px; width: 2px; height: 44px; background: #b0b0b0; }
.tab svg { width: 32px; height: 32px; margin-top: 32px; }
.tab span { margin: 22px 0 0 13px; line-height: 54px; white-space: nowrap; letter-spacing: -.45px; }
.tab.first { width: 202px; padding-left: 14px; }
.tab.first span { margin-left: 12px; }
.plus { width: 20px; height: 20px; margin: 39px 0 0 27px; }

.toolbar { height: 80px; display: flex; background: linear-gradient(#efefef, #dedede 45%, #d2d2d2); }
.back { width: 64px; height: 64px; margin: 8px 0 0 -1513px; position: relative; }
.url {
  width: 1460px;
  height: 44px;
  margin: 18px 0 0 65px;
  background: #fff;
  border-radius: 4px;
  display: flex;
  align-items: center;
  padding-left: 23px;
  box-shadow: 0 0 3px 4px #98989c, inset 0 1px 2px #bbb;
}
.info { width: 28px; height: 28px; }
.vsep { width: 2px; height: 32px; margin-left: 12px; background: #ccc; }
.address { margin-left: 10px; width: 95px; height: 30px; line-height: 32px; background: #b2d7fe; color: #000; font-size: 24px; letter-spacing: -.2px; white-space: nowrap; }
.drop { width: 20px; height: 15px; margin-left: 1187px; }
.url .drop + .vsep { margin-left: 17px; }
.reload { width: 24px; height: 24px; margin-left: 19px; }
.search { width: 452px; height: 48px; margin: 16px 0 0 1467px; border-radius: 6px; background: #fff; box-shadow: 0 1px 0 #aaa; display: flex; align-items: center; padding-left: 11px; color: #737373; font-size: 24px; }
.search svg { width: 28px; height: 28px; }
.search span { margin-left: 12px; line-height: 50px; padding-top: 2px; letter-spacing: -.2px; }
.i-star { width: 32px; height: 32px; margin: 24px 0 0 21px; }
.tsep { width: 2px; height: 36px; background: #adadad; margin-top: 22px; }
.tsep.a { margin-left: 11px; }
.i-clip { width: 29px; height: 32px; margin: 24px 0 0 12px; }
.i-down { width: 28px; height: 28px; margin: 26px 0 0 31px; }
.i-home { width: 32px; height: 28px; margin: 26px 0 0 34px; }
.i-smile { width: 30px; height: 28px; margin: 27px 0 0 33px; }
.i-pocket { width: 32px; height: 28px; margin: 26px 0 0 33px; }
.i-bug { width: 32px; height: 26px; margin: 27px 0 0 29px; }
.tsep.b { margin-left: 11px; }
.i-tri { width: 14px; height: 8px; margin: 35px 0 0 8px; }
.tsep.c { height: 78px; margin: 2px 0 0 22px; background: #c4c4c4; }
.i-menu { width: 33px; height: 27px; margin: 26px 0 0 26px; }

.bookmarks { height: 46px; display: flex; background: #d2d2d2; border-bottom: 2px solid #b4b4b4; color: #000; font-size: 22px; }
.folder { width: 32px; height: 32px; margin: 3px 0 0 24px; }
.bm { line-height: 38px; white-space: nowrap; text-shadow: 0 1px 0 #eee; }
.mv { width: 130px; margin-left: 10px; }
.bm-tri { width: 13px; height: 8px; margin: 15px 0 0 10px; }
.bookmarks .g1, .bookmarks .g2, .bookmarks .g3, .ffico { width: 32px; height: 32px; margin-top: 2px; }
.bookmarks .g1 { margin-left: 28px; }
.ffico { margin-left: 32px; }
.gs { width: 160px; margin-left: 10px; letter-spacing: .15px; }
.bookmarks .g2 { margin-left: 32px; }
.bookmarks .g3 { margin-left: 32px; }

.page { position: relative; height: 1248px; overflow: hidden; padding: 200px 200px 0; font-family: "Liberation Sans", Arial, sans-serif; font-size: 28px; color: #333; }
.heading { display: flex; justify-content: space-between; height: 179px; border-bottom: 2px solid #eee; margin-bottom: 40px; }
h1 { margin: 18px 0 0; font-size: 97px; font-weight: 400; line-height: 106px; word-spacing: -9px; letter-spacing: .4px; }
.btn { font-family: inherit; border: 2px solid; color: #fff; padding: 2px 0 0; display: block; }
.info-btn { width: 232px; height: 92px; border-radius: 12px; background: #5bc0de; border-color: #46b8da; font-size: 36px; padding-top: 3px; }
table { width: 2160px; border-spacing: 0; table-layout: fixed; line-height: 40px; }
th { text-align: left; background: #d9edf7; height: 76px; padding: 18px 16px 14px; border-bottom: 4px solid #ddd; letter-spacing: .2px; }
th:nth-child(1) { width: 734px; }
th:nth-child(2) { width: 734px; }
td { height: 102px; padding: 18px 16px 0; border-top: 2px solid #ddd; vertical-align: top; letter-spacing: .2px; }
td:last-child { padding-top: 16px; letter-spacing: 0; }
tbody tr:first-child td { border-top: 0; height: 100px; }
tbody tr:nth-child(odd) td { background: #f2dede; }
tbody tr:nth-child(even) td { background: #dff0d8; }
.acts { display: flex; justify-content: flex-end; }
.acts .btn { height: 68px; border-radius: 8px; font-size: 28px; }
.del { width: 131px; background: #d9534f; border-color: #d43f3a; }
.edit { width: 101px; background: #337ab7; border-color: #2e6da4; }
.shade { position: absolute; left: 0; right: 0; bottom: 0; height: 80px; background: linear-gradient(transparent, rgba(0,0,0,.08)); -webkit-mask-image: linear-gradient(90deg, transparent, #000 4%, #000 96%, transparent); mask-image: linear-gradient(90deg, transparent, #000 4%, #000 96%, transparent); }

.behind { position: absolute; left: 45px; top: 1480px; width: 2068px; height: 22px; background: #858585; border-radius: 0 0 8px 8px; }
.dock { position: relative; margin: 4px 0 0 63px; width: 2434px; height: 98px; padding-left: 5px; background: #292929; border-top: 2px solid #1c1c1c; border-radius: 10px 10px 0 0; display: flex; }
.dock > svg { width: 79.63px; height: 98px; margin-top: -2px; }
.dock > .on { background: radial-gradient(circle at 50% 90px, #a8a8a8 3.6px, transparent 4.4px); }
.dsep { width: 2px; height: 70px; margin: 12px 14px 0 18px; background: #5d5d5d; }
.t-b { font: 700 26px "Liberation Sans", sans-serif; fill: #fff; }
.t-jun { font: 12px Inter, sans-serif; fill: #fff; }
.t-14 { font: 300 32px Inter, sans-serif; fill: #222; letter-spacing: -1px; }
.t-280 { font: 700 8px Inter, sans-serif; fill: #fff; }
.t-3d { font: 11px Inter, sans-serif; fill: #333; }
.t-pages { font: 9px Inter, sans-serif; fill: #fff; }
.t-2 { font: 19px Inter, sans-serif; fill: #fff; }
.t-s { font: 900 38px Lato, sans-serif; fill: #4a2148; }
.t-tiny { font: 700 5px Inter, sans-serif; fill: #cfdcec; }
.t-w { font: 700 19px "Liberation Serif", serif; fill: #2a5599; }
.t-sub { font: 700 36px "Open Sans", sans-serif; fill: #fb9a2b; }
.t-ws { font: 700 25px "Open Sans", sans-serif; fill: #fff; }
```
